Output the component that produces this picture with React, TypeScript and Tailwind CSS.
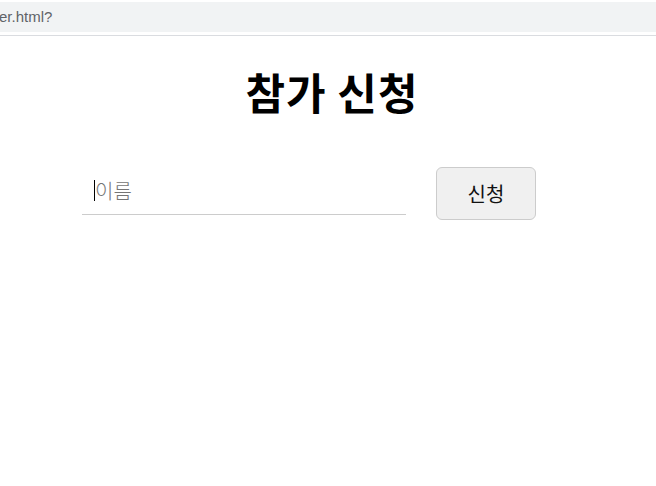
export default function App() {
  return (
    <div
      className="min-h-screen bg-white"
      style={{ fontFamily: '"Noto Sans CJK KR", "Noto Sans", sans-serif' }}
    >
      {/* address bar strip */}
      <div className="h-[36px] border-b border-[#dadce0] flex flex-col">
        <div className="h-[30px] mt-[2px] bg-[#f1f3f4] flex items-center">
          <span
            className="text-[15px] text-[#5f6368] -ml-[1px]"
            style={{ fontFamily: '"Liberation Sans", Arial, sans-serif' }}
          >
            er.html?
          </span>
        </div>
      </div>

      {/* title */}
      <h1 className="text-center text-[43px] font-bold text-black leading-none mt-[34px] tracking-[1px] pl-[8px]">
        참가 신청
      </h1>

      {/* form */}
      <div className="flex items-start mt-[55px] pl-[82px]">
        <div className="w-[324px] h-[48px] border-b border-[#cccccc] flex items-center pl-[12px] mt-[-1px]">
          <span className="w-[1px] h-[21px] bg-black shrink-0" />
          <input
            placeholder="이름"
            className="w-full outline-none bg-transparent text-[20px] text-black placeholder:text-[#757575] placeholder:font-light"
          />
        </div>
        <button className="ml-[30px] mt-[-1px] w-[100px] h-[53px] rounded-[6px] border border-[#cccccc] bg-[#f0f0f0] text-[20px] text-[#111]">
          신청
        </button>
      </div>
    </div>
  );
}
